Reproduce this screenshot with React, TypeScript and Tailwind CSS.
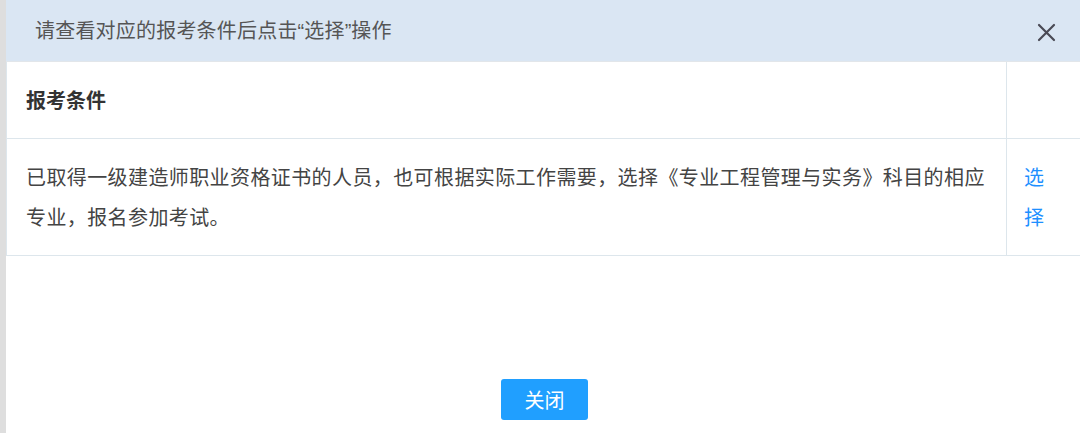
const FONT = "font-['Microsoft_YaHei','Noto_Sans_CJK_SC',sans-serif]"

export default function App() {
  return (
    <div className={`${FONT} relative w-[1080px] h-[433px] overflow-hidden bg-[#dedede] flex`}>
      {/* Диалог */}
      <div className="ml-[6px] w-[1110px] shrink-0 h-full bg-white flex flex-col">
        {/* Заголовок */}
        <div className="h-[62px] shrink-0 bg-[#dae6f3] border-b border-[#e2e6ea] flex items-center pl-[29px]">
          <span className="text-[20px] text-[#555] leading-none tracking-[0.2px]">
            请查看对应的报考条件后点击
            <span className="font-['Liberation_Sans',sans-serif] tracking-normal">“</span>
            选择
            <span className="font-['Liberation_Sans',sans-serif] tracking-normal">”</span>
            操作
          </span>
        </div>

        {/* Таблица */}
        <table className="w-[1110px] border-collapse text-[20px] text-[#444]">
          <tbody>
            <tr className="h-[76px] border-b border-[#dde6ec]">
              <td className="border-l border-[#dde6ec] pl-[19px] font-bold text-[#333] w-[1000px]">
                报考条件
              </td>
              <td className="border-l border-[#dde6ec]" />
            </tr>
            <tr className="border-b border-[#dde6ec]">
              <td className="border-l border-[#dde6ec] pl-[19px] pr-[14px] py-[18px] leading-[40px] tracking-[0.4px] align-top">
                已取得一级建造师职业资格证书的人员，也可根据实际工作需要，选择《专业工程管理与实务》科目的相应专业，报名参加考试。
              </td>
              <td className="border-l border-[#dde6ec] pl-[17px] py-[18px] leading-[40px] align-top">
                <div className="w-[20px] text-[#1e90ff] cursor-pointer">选择</div>
              </td>
            </tr>
          </tbody>
        </table>

        {/* Кнопка */}
        <div className="flex-1 flex items-end justify-start pb-[13px]">
          <button className="ml-[495px] w-[87px] h-[41px] rounded-[3px] bg-[#209fff] text-white text-[20px]">
            关闭
          </button>
        </div>
      </div>

      {/* Закрыть */}
      <button className="absolute left-[1037px] top-[23px] text-[#4a4a55]" aria-label="关闭">
        <svg width="19" height="19" viewBox="0 0 19 19" fill="none" stroke="currentColor" strokeWidth="2.2" strokeLinecap="round">
          <path d="M2 2 L17 17 M17 2 L2 17" />
        </svg>
      </button>
    </div>
  )
}
